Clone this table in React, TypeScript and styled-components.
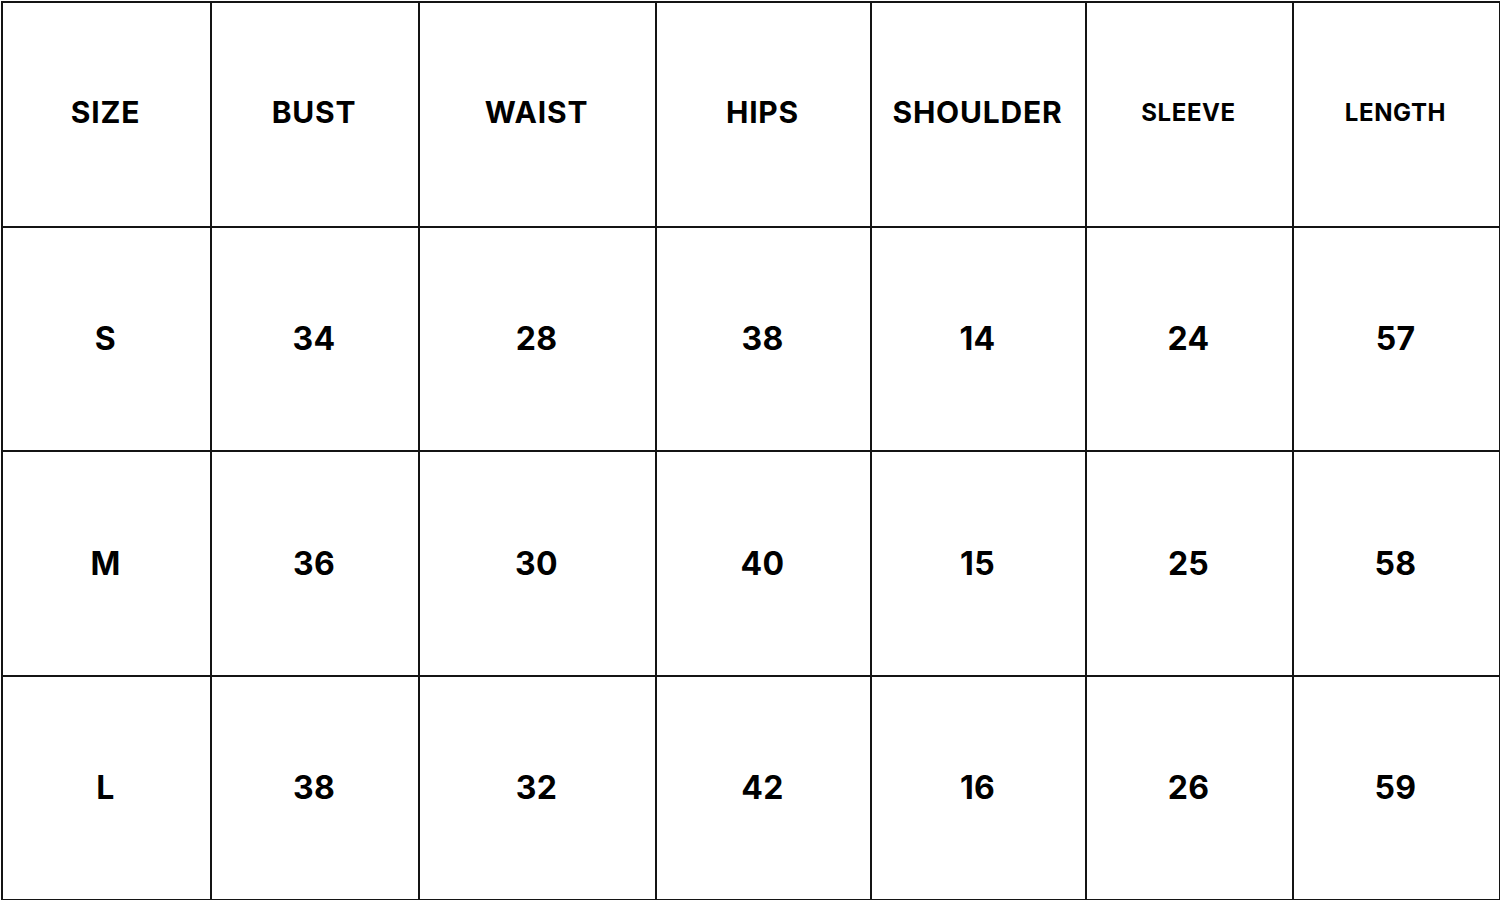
import React from 'react';
import styled, { createGlobalStyle } from 'styled-components';

const GlobalStyle = createGlobalStyle`
  html, body {
    margin: 0;
    padding: 0;
    background: #ffffff;
  }
  body {
    font-family: Inter, 'Liberation Sans', sans-serif;
    color: #000;
  }
`;

interface Column {
  label: string;
  width: number;
  small?: boolean;
}

const COLUMNS: Column[] = [
  { label: 'SIZE', width: 209 },
  { label: 'BUST', width: 208 },
  { label: 'WAIST', width: 237 },
  { label: 'HIPS', width: 215 },
  { label: 'SHOULDER', width: 215 },
  { label: 'SLEEVE', width: 207, small: true },
  { label: 'LENGTH', width: 207, small: true },
];

const ROWS: string[][] = [
  ['S', '34', '28', '38', '14', '24', '57'],
  ['M', '36', '30', '40', '15', '25', '58'],
  ['L', '38', '32', '42', '16', '26', '59'],
];

const App: React.FC = () => {
  return (
    <>
      <GlobalStyle />
      <Page>
        <Table>
          <colgroup>
            {COLUMNS.map((col) => (
              <col key={col.label} style={{ width: col.width }} />
            ))}
          </colgroup>
          <thead>
            <Row>
              {COLUMNS.map((col) => (
                <HeadCell key={col.label} small={col.small}>
                  {col.label}
                </HeadCell>
              ))}
            </Row>
          </thead>
          <tbody>
            {ROWS.map((row) => (
              <Row key={row[0]}>
                {row.map((value, idx) => (
                  <Cell key={idx}>{value}</Cell>
                ))}
              </Row>
            ))}
          </tbody>
        </Table>
      </Page>
    </>
  );
};

export default App;

const Page = styled.div`
  width: 1500px;
  height: 900px;
  padding: 1px;
  box-sizing: border-box;
  overflow: hidden;
`;

const Table = styled.table`
  width: 1498px;
  height: 898px;
  table-layout: fixed;
  border-collapse: collapse;
`;

const Row = styled.tr`
  height: 224.5px;
`;

const Cell = styled.td`
  border: 2px solid #141414;
  padding: 0 2px 0 0;
  text-align: center;
  vertical-align: middle;
  font-size: 32px;
  font-weight: 700;
  letter-spacing: 0.3px;
`;

const HeadCell = styled.th<{ small?: boolean }>`
  border: 2px solid #141414;
  padding: 0 2px 4px 0;
  text-align: center;
  vertical-align: middle;
  font-size: ${({ small }) => (small ? '24px' : '30px')};
  font-weight: 700;
  letter-spacing: ${({ small }) => (small ? '0.6px' : '0.8px')};
`;
